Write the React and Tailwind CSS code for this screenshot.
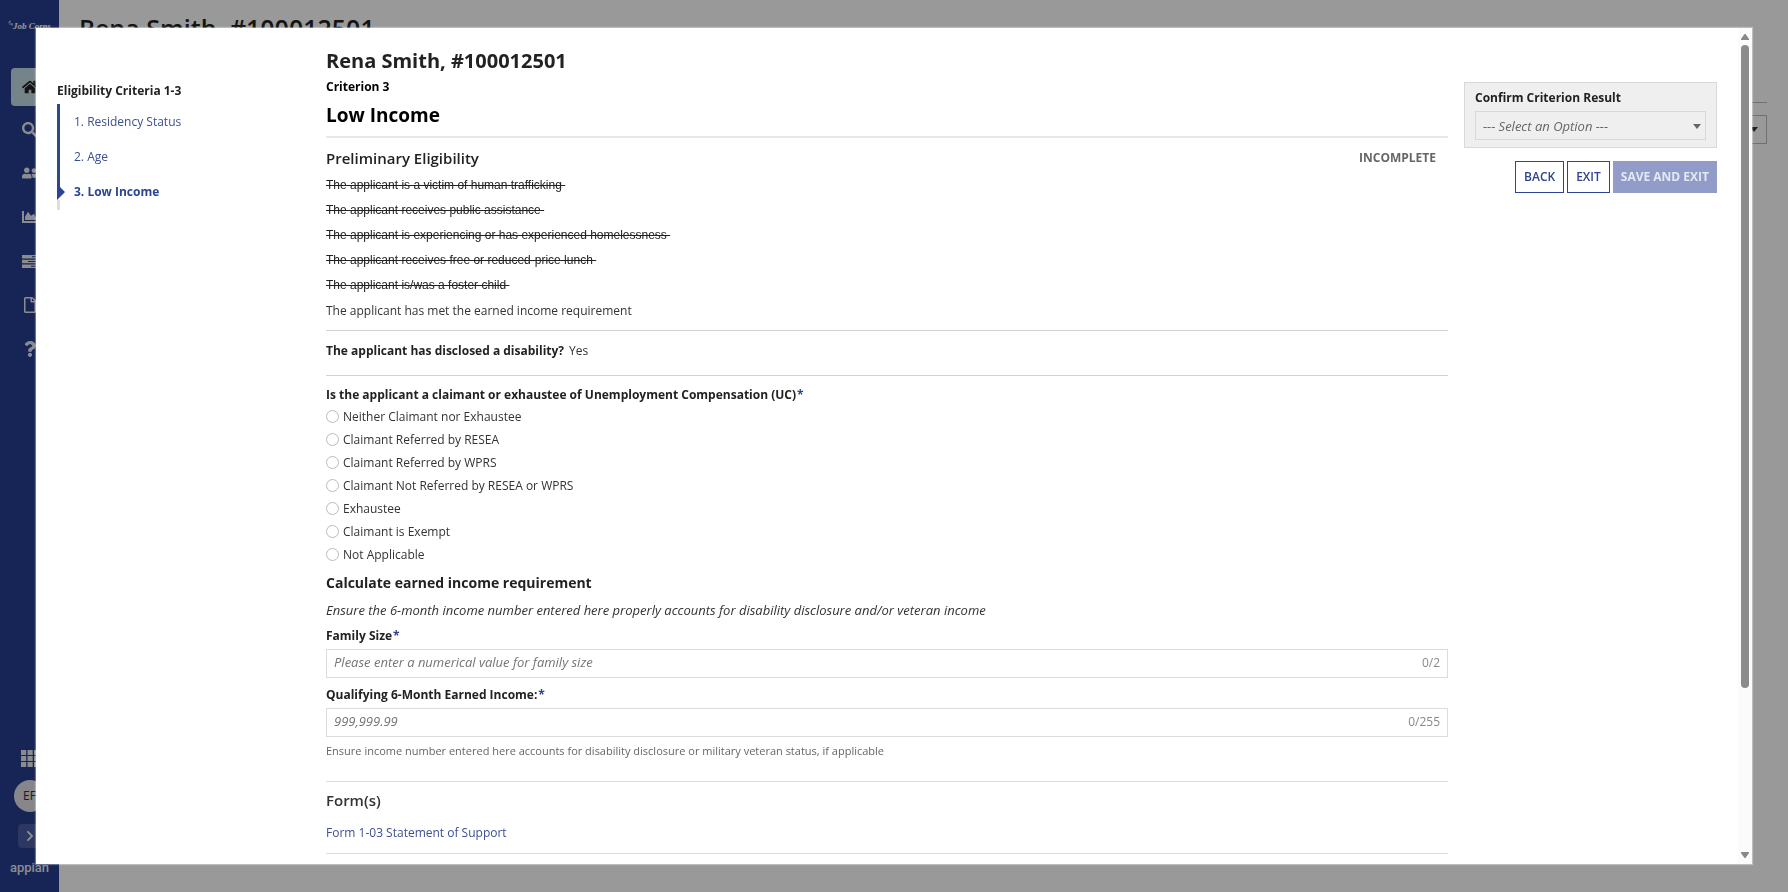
import { FaHome, FaSearch, FaUserFriends, FaChartArea, FaRegFile, FaQuestion, FaChevronRight } from "react-icons/fa";

const struck = [
  "The applicant is a victim of human trafficking",
  "The applicant receives public assistance",
  "The applicant is experiencing or has experienced homelessness",
  "The applicant receives free or reduced-price lunch",
  "The applicant is/was a foster child",
];

const ucOptions = [
  "Neither Claimant nor Exhaustee",
  "Claimant Referred by RESEA",
  "Claimant Referred by WPRS",
  "Claimant Not Referred by RESEA or WPRS",
  "Exhaustee",
  "Claimant is Exempt",
  "Not Applicable",
];

const steps = ["1. Residency Status", "2. Age"];

function TasksIcon() {
  return (
    <svg viewBox="0 0 16 13" className="h-[13px] w-4" fill="currentColor" aria-hidden="true">
      <path fillRule="evenodd" d="M0 0h16v3.600H0zM10 1.300h5v1h-5zM0 4.700h16v3.600H0zM6 6h9v1H6zM0 9.400h16V13H0zM9 10.700h6v1H9z" />
    </svg>
  );
}

function GridIcon() {
  return (
    <svg viewBox="0 0 18 17" className="h-[17px] w-[18px]" fill="currentColor" aria-hidden="true">
      {[0, 6.5, 13].map((x) => [0, 6, 12].map((y) => <rect key={x + "-" + y} x={x} y={y} width="5.200" height="5" />))}
    </svg>
  );
}

function SideButton({ label, active, children }) {
  return (
    <button
      type="button"
      aria-label={label}
      className={
        active
          ? "-mb-0.5 flex h-[38px] w-[38px] items-center justify-center rounded bg-[#c2dde4] text-base text-[#222]"
          : "flex h-[38px] w-[38px] items-center justify-center rounded text-base text-[#e8eaf0]"
      }
    >
      {children}
    </button>
  );
}

function Sidebar() {
  return (
    <nav className="flex w-[59px] shrink-0 flex-col items-center bg-[#253c90]">
      <div className="mt-5 flex h-3 items-start whitespace-nowrap text-white">
        <svg viewBox="0 0 5 6" className="h-[6px] w-[5px]" aria-hidden="true">
          <path d="M0 3.500L2 1M2 0.500V5M3.500 3V5.500M4.600 3.500V5.500" stroke="currentColor" strokeWidth="0.600" fill="none" />
        </svg>
        <span className="font-['Liberation_Serif',serif] text-[9px] leading-3 font-bold italic">Job Corps</span>
      </div>
      <div className="mt-9 flex flex-col gap-[6px]">
        <SideButton label="Home" active><FaHome /></SideButton>
        <SideButton label="Search"><FaSearch className="text-[15px]" /></SideButton>
        <SideButton label="People"><FaUserFriends /></SideButton>
        <SideButton label="Reports"><FaChartArea /></SideButton>
        <SideButton label="Tasks"><TasksIcon /></SideButton>
        <SideButton label="Documents"><FaRegFile /></SideButton>
        <SideButton label="Help"><FaQuestion /></SideButton>
      </div>
      <div className="mt-auto flex flex-col items-center text-[#e8eaf0]">
        <button type="button" aria-label="Apps"><GridIcon /></button>
        <div className="mt-[13px] flex h-8 w-8 items-center justify-center rounded-full bg-[#e0e0e8] text-xs text-[#333]">EF</div>
        <button type="button" aria-label="Expand" className="mt-3 flex h-6 w-6 items-center justify-center rounded-sm bg-[#4a5ca3] text-xs">
          <FaChevronRight />
        </button>
        <div className="mt-[10px] mb-[14px] font-['Roboto',sans-serif] text-[13px] leading-5 font-medium">appian</div>
      </div>
    </nav>
  );
}

function Required() {
  return <span className="pl-px text-[#2c4492]">*</span>;
}

function CountedInput({ id, placeholder, count }) {
  return (
    <div className="mt-[3px] flex h-[29px] items-center border border-[#dcdcdc] px-[7px] pb-px text-xs">
      <input
        id={id}
        type="text"
        placeholder={placeholder}
        className="min-w-0 flex-1 text-[13px] outline-none placeholder:text-[#757575] placeholder:italic"
      />
      <span className="text-[#888]">{count}</span>
    </div>
  );
}

function Progress() {
  return (
    <nav className="w-[269px] shrink-0 pt-[53px] text-xs">
      <h2 className="leading-5 font-bold text-[#222]">Eligibility Criteria 1-3</h2>
      <div className="mt-[3px] flex">
        <div className="flex w-[17px] flex-col">
          <div className="w-[3px] flex-1 bg-[#2c4a8a]" />
          <svg viewBox="0 0 8 16" className="h-4 w-2" aria-hidden="true">
            <path d="M0 0H3V3L8 8L3 13L0 16z" fill="#2c4492" />
          </svg>
          <div className="h-[10px] w-[3px] bg-[#dedede]" />
        </div>
        <ol>
          {steps.map((s) => (
            <li key={s} className="h-[35px] leading-[35px]">
              <a href="#" className="text-[#3c4f93]">{s}</a>
            </li>
          ))}
          <li className="h-9 leading-[36px] font-bold text-[#2c4492]" aria-current="step">3. Low Income</li>
        </ol>
      </div>
    </nav>
  );
}

function Criterion() {
  return (
    <main className="min-w-0 flex-1 pt-[17px] text-xs leading-5 text-[#333]">
      <h1 className="text-[20px] leading-8 font-bold text-[#222]">Rena Smith, #100012501</h1>
      <p className="font-bold text-black">Criterion 3</p>
      <h2 className="mt-1 text-[19px] leading-7 font-bold text-black">Low Income</h2>
      <hr className="mt-[7px] border-t-2 border-[#e8e8e8]" />
      <div className="mt-2 flex items-center justify-between leading-6 font-semibold">
        <h3 className="text-[15px] text-[#222]">Preliminary Eligibility</h3>
        <span className="pr-3 font-bold text-[#666]">INCOMPLETE</span>
      </div>
      <ul className="mt-[3px] leading-[25px]">
        {struck.map((s) => (
          <li key={s} className="font-['Liberation_Sans',sans-serif] text-[#222]">
            <s className="whitespace-pre">{s + " "}</s>
          </li>
        ))}
        <li>The applicant has met the earned income requirement</li>
      </ul>
      <hr className="mt-[7px] border-[#d2d2d2]" />
      <p className="mt-[10px]">
        <b className="pr-[5px] text-[#222]">The applicant has disclosed a disability?</b>Yes
      </p>
      <hr className="mt-[14px] border-[#d2d2d2]" />
      <fieldset className="mt-[9px]">
        <legend className="font-bold text-[#222]">Is the applicant a claimant or exhaustee of Unemployment Compensation (UC)<Required /></legend>
        {ucOptions.map((o) => (
          <label key={o} className="flex h-[23px] items-center gap-[4px]">
            <input type="radio" name="uc" className="h-[13px] w-[13px] appearance-none rounded-full border border-[#bbb] checked:border-4 checked:border-[#2c4492]" />
            {o}
          </label>
        ))}
      </fieldset>
      <h3 className="mt-[5px] text-[14px] leading-6 font-bold text-[#222]">Calculate earned income requirement</h3>
      <p className="mt-[5px] text-[13px] leading-5 italic">Ensure the 6-month income number entered here properly accounts for disability disclosure and/or veteran income</p>
      <label htmlFor="family" className="mt-[6px] block font-bold text-[#222]">Family Size<Required /></label>
      <CountedInput id="family" placeholder="Please enter a numerical value for family size" count="0/2" />
      <label htmlFor="income" className="mt-[7px] block font-bold text-[#222]">Qualifying 6-Month Earned Income:<Required /></label>
      <CountedInput id="income" placeholder="999,999.99" count="0/255" />
      <p className="mt-1 text-[11px] leading-5 text-[#666]">Ensure income number entered here accounts for disability disclosure or military veteran status, if applicable</p>
      <hr className="mt-5 border-[#dcdcdc]" />
      <h3 className="mt-[6px] text-[15px] leading-6 font-semibold">Form(s)</h3>
      <p className="mt-[11px]"><a href="#" className="text-[#3c4f93]">Form 1-03 Statement of Support</a></p>
      <hr className="mt-[10px] border-[#dcdcdc]" />
    </main>
  );
}

function Result() {
  return (
    <aside className="mr-[21px] ml-4 w-[253px] shrink-0 pt-[54px] text-xs leading-5">
      <div className="border border-[#d8d8d8] bg-[#efefef] px-[10px] pt-[5px] pb-[7px]">
        <label htmlFor="result" className="block font-bold text-[#222]">Confirm Criterion Result</label>
        <div className="relative mt-[3px]">
          <select id="result" className="h-[29px] w-full appearance-none border border-[#d8d8d8] px-[7px] text-[13px] text-[#666] italic">
            <option>--- Select an Option ---</option>
          </select>
          <svg viewBox="0 0 8 5" className="pointer-events-none absolute top-[13px] right-[5px] h-[5px] w-2" aria-hidden="true">
            <path d="M0 0h8L4 5z" fill="#666" />
          </svg>
        </div>
      </div>
      <div className="mt-[13px] flex justify-end gap-[3px] font-semibold">
        <button type="button" className="h-8 border border-[#2c4492] px-2 pb-px text-[#2c4492]">BACK</button>
        <button type="button" className="h-8 border border-[#2c4492] px-2 pb-px text-[#2c4492]">EXIT</button>
        <button type="button" className="h-8 bg-[#919dc8] px-2 pb-px font-bold text-[#e4e8f4]">SAVE AND EXIT</button>
      </div>
    </aside>
  );
}

function Scrollbar() {
  return (
    <div className="flex w-[14px] shrink-0 flex-col items-center bg-[#fbfbfb] py-[6px]" aria-hidden="true">
      <svg viewBox="0 0 8 6" className="h-[6px] w-2 shrink-0"><path d="M3.500 0h1L8 5v1H0V5z" fill="#888" /></svg>
      <div className="mt-[5px] h-[78%] w-[8px] rounded-full bg-[#8b8b8b]" />
      <svg viewBox="0 0 8 6" className="mt-auto h-[6px] w-2 shrink-0"><path d="M3.500 6h1L8 1V0H0v1z" fill="#888" /></svg>
    </div>
  );
}

export default function App() {
  return (
    <div className="flex min-h-screen bg-white font-['Open_Sans',sans-serif]">
      <Sidebar />
      <div className="flex-1 pt-[10px] pr-[21px] pl-5">
        <div className="text-[25px] leading-9 font-semibold text-[#222]">Rena Smith, #100012501</div>
        <hr className="mt-[56px] border-[#bbb]" />
        <div className="mt-3 ml-auto flex h-[29px] w-40 items-center justify-end border border-[#bbb] pr-2">
          <svg viewBox="0 0 8 5" className="h-[5px] w-2" aria-hidden="true"><path d="M0 0h8L4 5z" fill="#333" /></svg>
        </div>
      </div>
      <div className="fixed inset-0 bg-black/40" />
      <div role="dialog" aria-label="Eligibility criteria" className="fixed inset-x-9 inset-y-7 flex overflow-hidden bg-white shadow-[0_0_1px_1px_rgba(255,255,255,0.35)]">
        <div className="flex min-w-0 flex-1 overflow-hidden pl-[21px]">
          <Progress />
          <Criterion />
          <Result />
        </div>
        <Scrollbar />
      </div>
    </div>
  );
}
